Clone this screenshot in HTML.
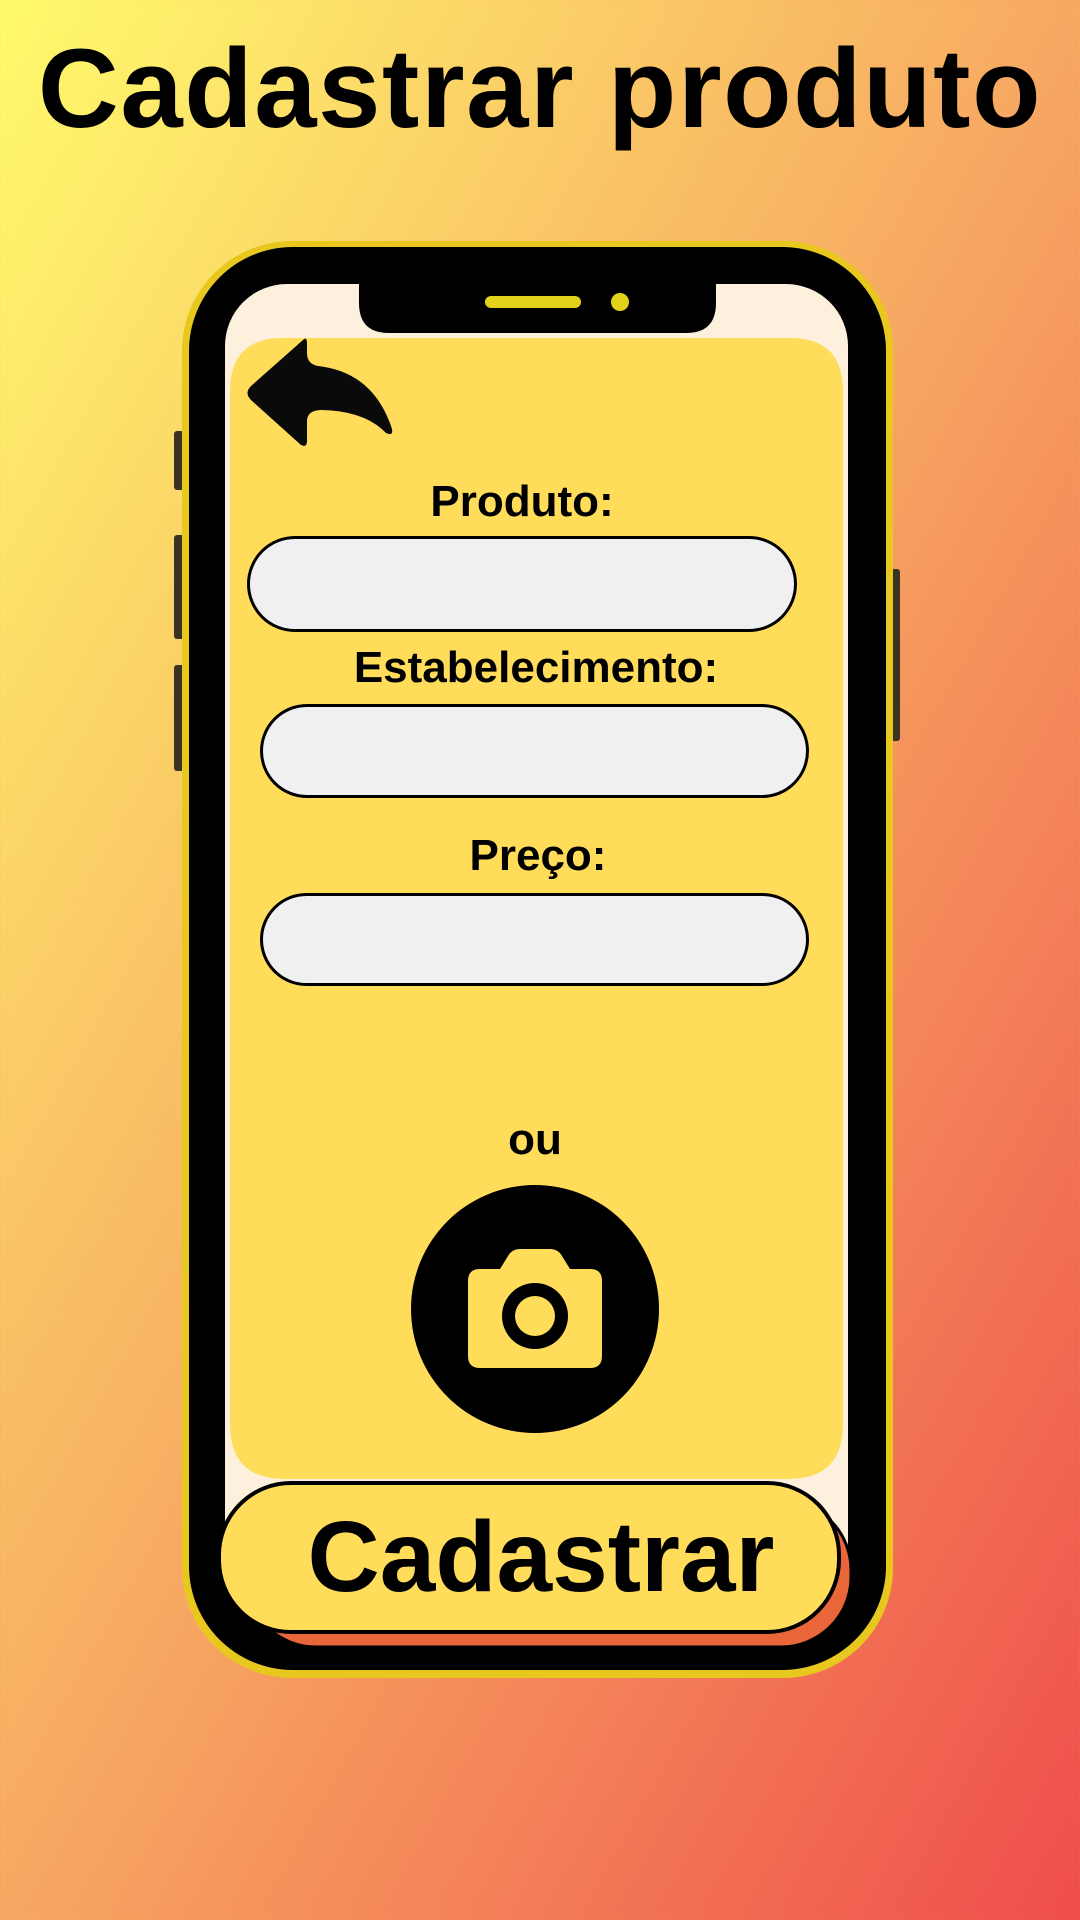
<!DOCTYPE html>
<html><head><meta charset="utf-8"><style>
html,body{margin:0;padding:0}
body{width:1080px;height:1920px;position:relative;overflow:hidden;background:linear-gradient(to bottom right,#fffb6c 0%,#f7a862 50%,#ef4d4b 100%);font-family:"Liberation Sans",sans-serif}
.t{position:absolute;left:0;width:1080px;text-align:center;font-weight:bold;color:#000}
.inp{position:absolute;background:#f0f0f0;border:3px solid #000;border-radius:50px;box-sizing:border-box}
</style></head><body>
<div class="t" style="top:24px;font-size:112px;letter-spacing:1.6px;line-height:130px">Cadastrar produto</div>
<svg width="1080" height="1920" style="position:absolute;left:0;top:0">
<rect x="174" y="431" width="10" height="59" rx="3" fill="#3a3322"/>
<rect x="174" y="535" width="10" height="104" rx="3" fill="#3a3322"/>
<rect x="174" y="665" width="10" height="106" rx="3" fill="#3a3322"/>
<rect x="888" y="569" width="12" height="172" rx="3" fill="#3a3322"/>
<rect x="182" y="241" width="711" height="1437" rx="110" fill="#e8c81f"/>
<rect x="189" y="247" width="697" height="1423" rx="104" fill="#000"/>
<rect x="225" y="284" width="623" height="1340" rx="62" fill="#fdf0dc"/>
<path d="M359,284 L716,284 L716,303 Q716,333 686,333 L389,333 Q359,333 359,303 Z" fill="#000"/>
<rect x="485" y="296" width="96" height="12" rx="6" fill="#e3d21a"/>
<circle cx="620" cy="302" r="9" fill="#e3d21a"/>
<path d="M230,391 Q230,338 283,338 L790,338 Q843,338 843,391 L843,1424 Q843,1479 788,1479 L285,1479 Q230,1479 230,1424 Z" fill="#ffdd5a"/>
<path d="M303,340 L251,386 Q244,393 251,400 L301,445 Q307,448 307,441 L307,420 Q308,410 322,410 Q365,411 386,433 Q395,437 391,426 Q372,372 318,366 Q307,364 307,353 L307,344 Q307,336 303,340 Z" fill="#0a0a0a"/>
<circle cx="535" cy="1309" r="124" fill="#000"/>
<path d="M500,1269 L508,1256 Q512,1249 520,1249 L550,1249 Q558,1249 562,1256 L570,1269 L590,1269 Q602,1269 602,1281 L602,1356 Q602,1368 590,1368 L480,1368 Q468,1368 468,1356 L468,1281 Q468,1269 480,1269 Z" fill="#ffdd5a"/>
<circle cx="535" cy="1316" r="33" fill="#000"/>
<circle cx="535" cy="1316" r="20" fill="#ffdd5a"/>
<rect x="246" y="1500" width="605" height="147" rx="70" fill="#e8663a" stroke="#000" stroke-width="3"/>
<rect x="219" y="1483" width="620" height="149" rx="72" fill="#ffdd5a" stroke="#000" stroke-width="4"/>
</svg>
<div class="t" style="top:476px;font-size:44px;line-height:52px;left:-18px">Produto:</div>
<div class="inp" style="left:247px;top:536px;width:550px;height:96px"></div>
<div class="t" style="top:642px;font-size:44px;line-height:52px;left:-4px">Estabelecimento:</div>
<div class="inp" style="left:260px;top:704px;width:549px;height:94px"></div>
<div class="t" style="top:830px;font-size:44px;line-height:52px;left:-2px">Preço:</div>
<div class="inp" style="left:260px;top:893px;width:549px;height:93px"></div>
<div class="t" style="top:1114px;font-size:44px;line-height:52px;left:-5px">ou</div>
<div class="t" style="top:1497px;font-size:100px;line-height:120px;left:1px">Cadastrar</div>
</body></html>
